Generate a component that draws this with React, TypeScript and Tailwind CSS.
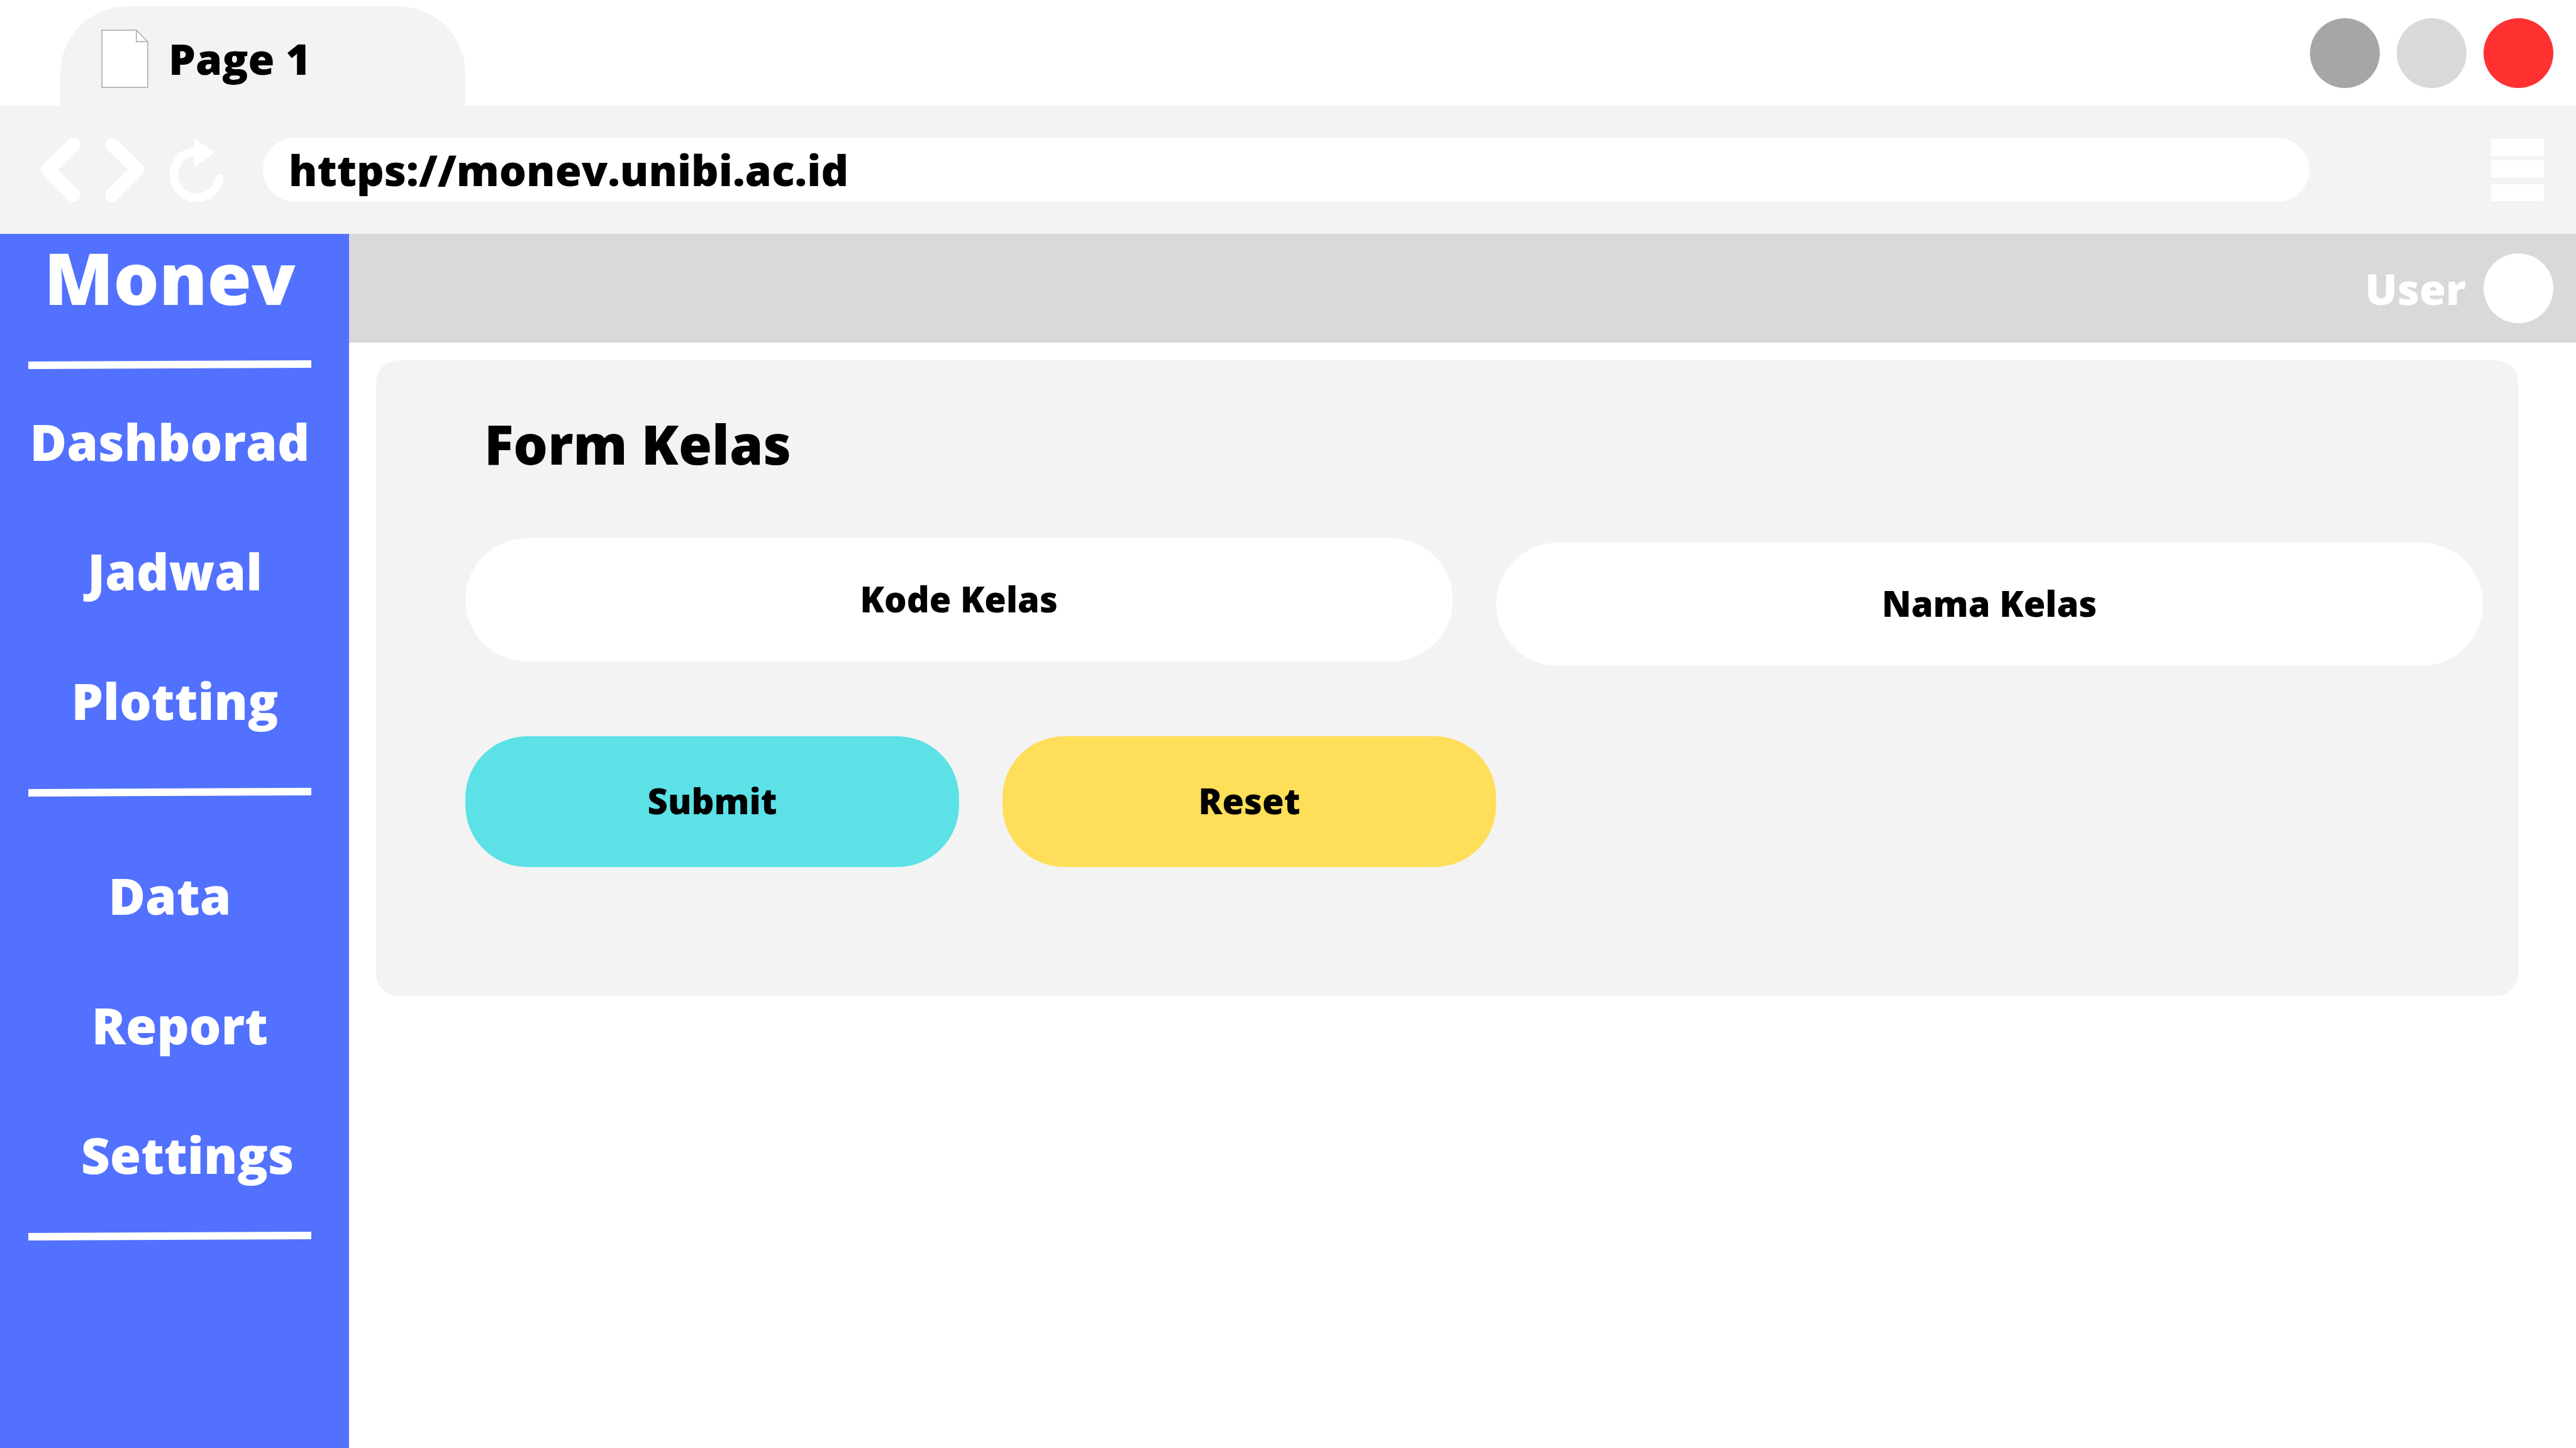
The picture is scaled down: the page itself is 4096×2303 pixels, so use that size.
import type { ReactNode } from "react";

function PageIcon() {
  return (
    <svg viewBox="0 0 78 97" className="h-[93px] w-[75px]" aria-hidden="true">
      <path d="M1 1H58L77 20V96H1Z" fill="#fff" stroke="#a6a6a6" strokeWidth="1.5" />
      <path d="M58 1V20H77" fill="none" stroke="#a6a6a6" strokeWidth="1.5" />
    </svg>
  );
}

function ChevronIcon({ points }: { points: string }) {
  return (
    <svg viewBox="0 0 196 319" className="h-[102px] w-[63px]" aria-hidden="true">
      <polyline
        points={points}
        fill="none"
        stroke="#fff"
        strokeWidth="69"
        strokeLinecap="round"
        strokeLinejoin="round"
      />
    </svg>
  );
}

function ReloadIcon() {
  return (
    <svg viewBox="692 54 272 318" className="h-[102px] w-[87px]" aria-hidden="true">
      <path
        d="M818 122.5A115 115 0 1 0 942 257"
        fill="none"
        stroke="#fff"
        strokeWidth="42"
      />
      <circle cx="942" cy="257" r="21" fill="#fff" />
      <path d="M816 54L918 128L816 201Z" fill="#fff" />
    </svg>
  );
}

function MenuIcon() {
  return (
    <svg viewBox="0 0 84 99" className="h-[99px] w-[84px]" aria-hidden="true">
      <path d="M0 0H84V27H0ZM0 34H84V61H0ZM0 72H84V99H0Z" fill="#fff" />
    </svg>
  );
}

function Divider() {
  return (
    <svg viewBox="0 0 450 14" className="h-[14px] w-full" preserveAspectRatio="none" aria-hidden="true">
      <path d="M0 2L450 0V12L0 14Z" fill="#fff" />
    </svg>
  );
}

function NavItem({ className = "", children }: { className?: string; children: ReactNode }) {
  return (
    <li className={`flex h-[206px] items-center justify-center ${className}`}>
      <a href="#" className="text-[80px] leading-none">
        {children}
      </a>
    </li>
  );
}

function TabStrip() {
  return (
    <div className="flex items-start justify-between pr-9 pl-24">
      <div className="mt-[10px] flex h-[158px] w-[644px] items-center gap-8 rounded-t-[107px] bg-[#f3f3f3] pt-2 pl-[65px]">
        <PageIcon />
        <span className="text-[68px] leading-none">Page 1</span>
      </div>
      <div className="mt-[29px] flex gap-[27px]">
        <button type="button" aria-label="Minimize" className="size-[111px] rounded-full bg-[#a6a6a6]" />
        <button type="button" aria-label="Maximize" className="size-[111px] rounded-full bg-[#d9d9d9]" />
        <button type="button" aria-label="Close" className="size-[111px] rounded-full bg-[#ff3131]" />
      </div>
    </div>
  );
}

function Toolbar() {
  return (
    <div className="flex h-[204px] items-center bg-[#f3f3f3] pr-[51px] pl-[65px]">
      <div className="flex gap-[39px]">
        <button type="button" aria-label="Back">
          <ChevronIcon points="161,35 35,159.5 161,284" />
        </button>
        <button type="button" aria-label="Forward">
          <ChevronIcon points="35,35 161,159.5 35,284" />
        </button>
        <button type="button" aria-label="Reload">
          <ReloadIcon />
        </button>
      </div>
      <input
        type="text"
        aria-label="Address"
        defaultValue="https://monev.unibi.ac.id"
        className="mr-[289px] ml-[62px] h-[102px] min-w-0 flex-1 rounded-full bg-white pb-0.5 pl-[41px] text-[68px] leading-none outline-none"
      />
      <button type="button" aria-label="Menu">
        <MenuIcon />
      </button>
    </div>
  );
}

function Sidebar() {
  return (
    <aside className="w-[555px] shrink-0 bg-[#5271ff] pr-[60px] pl-[45px] text-white">
      <h1 className="text-center text-[114px] leading-[138px]">Monev</h1>
      <nav className="flex flex-col pt-[63px]">
        <Divider />
        <ul className="pt-3 pb-9">
          <NavItem>Dashborad</NavItem>
          <NavItem className="pl-4">Jadwal</NavItem>
          <NavItem className="pl-4">Plotting</NavItem>
        </ul>
        <Divider />
        <ul className="pt-[54px] pb-5">
          <NavItem>Data</NavItem>
          <NavItem className="pl-8">Report</NavItem>
          <NavItem className="pl-14">Settings</NavItem>
        </ul>
        <Divider />
      </nav>
    </aside>
  );
}

const fieldClass =
  "h-[196px] w-full min-w-0 rounded-[98px] bg-white pb-1 text-center text-[56px] leading-none outline-none placeholder:text-black placeholder:opacity-100";

export default function App() {
  return (
    <div className="flex min-h-screen flex-col bg-white font-['Open_Sans',sans-serif] font-extrabold text-black">
      <TabStrip />
      <Toolbar />
      <div className="flex flex-1">
        <Sidebar />
        <div className="min-w-0 flex-1">
          <header className="flex h-[173px] items-center justify-end gap-7 bg-[#d9d9d9] pr-9">
            <span className="text-[68px] leading-none text-white">User</span>
            <button type="button" aria-label="User menu" className="size-[111px] rounded-full bg-white" />
          </header>
          <main className="pt-7 pr-[92px] pl-[43px]">
            <form className="rounded-[35px] bg-[#f3f3f3] pt-[83px] pr-14 pb-[205px] pl-[142px]">
              <h2 className="pl-[30px] text-[86px] leading-[100px]">Form Kelas</h2>
              <div className="mt-[100px] grid h-[203px] grid-cols-2 gap-[69px]">
                <input type="text" aria-label="Kode Kelas" placeholder="Kode Kelas" className={`${fieldClass} self-start`} />
                <input type="text" aria-label="Nama Kelas" placeholder="Nama Kelas" className={`${fieldClass} self-end`} />
              </div>
              <div className="mt-28 flex gap-[69px] text-[56px] leading-none">
                <button type="submit" className="h-[208px] w-[785px] rounded-[98px] bg-[#5ce1e6] pb-1">
                  Submit
                </button>
                <button type="reset" className="h-[208px] w-[785px] rounded-[98px] bg-[#ffde59] pb-1">
                  Reset
                </button>
              </div>
            </form>
          </main>
        </div>
      </div>
    </div>
  );
}
